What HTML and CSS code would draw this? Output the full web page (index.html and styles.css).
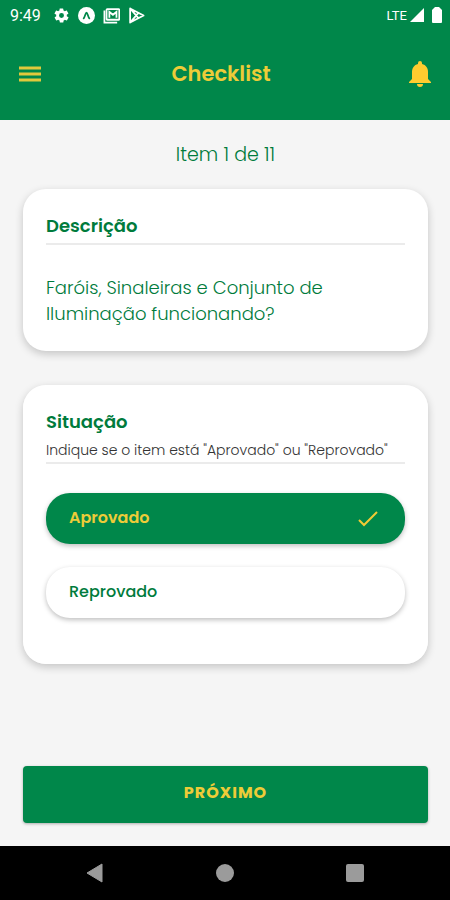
FILE: index.html
```html
<!DOCTYPE html>
<html lang="pt-BR">
<head>
    <meta charset="UTF-8">
    <meta name="viewport" content="width=device-width, initial-scale=1.0">
    <title>Checklist</title>
    <link rel="stylesheet" href="styles.css">
</head>
<body>
    <div class="status-bar">
        <span class="clock">9:49</span>
        <svg class="status-icon" viewBox="0 0 24 24"><path fill="#fff" fill-rule="evenodd" d="M19.4 13c0-.3.1-.7.1-1s0-.7-.1-1l2.1-1.600c.2-.2.2-.4.1-.6l-2-3.500c-.1-.2-.4-.3-.6-.2l-2.500 1c-.5-.4-1.100-.7-1.700-1l-.4-2.600c0-.2-.2-.5-.5-.5h-4c-.3 0-.5.200-.5.500l-.4 2.600c-.6.300-1.200.600-1.700 1l-2.500-1c-.2-.1-.5 0-.6.200l-2 3.500c-.1.200-.1.500.1.600L4.600 11c-.1.300-.1.700-.1 1s0 .7.1 1l-2.100 1.600c-.2.200-.2.400-.1.600l2 3.500c.1.200.4.300.6.200l2.500-1c.5.400 1.100.7 1.700 1l.4 2.600c0 .200.2.500.5.500h4c.3 0 .5-.2.5-.5l.4-2.600c.6-.3 1.200-.6 1.700-1l2.500 1c.2.100.5 0 .6-.2l2-3.500c.1-.2.1-.5-.1-.6zM12 15.500a3.500 3.500 0 1 1 0-7 3.500 3.500 0 0 1 0 7z"/></svg>
        <svg class="status-icon" viewBox="0 0 24 24"><circle cx="12" cy="12" r="12" fill="#fff"/><path d="M8 16c2-2 2.500-8 4-8s2 6 4 8" fill="none" stroke="#00874a" stroke-width="2.500" stroke-linecap="round"/></svg>
        <svg class="status-icon" viewBox="0 0 24 24" fill="none" stroke="#fff" stroke-width="2.500"><path d="M2 5v17h18"/><rect x="5" y="3" width="18" height="15" rx="1"/><path d="M9 15V7l5 4 5-4v8"/></svg>
        <svg class="status-icon" viewBox="0 0 24 24" fill="none" stroke="#fff" stroke-width="2.500" stroke-linejoin="round"><path d="M3 2l19 10L3 22zM3 2l12 14M3 22L15 8"/></svg>
        <span class="network">LTE</span>
        <svg class="signal" viewBox="0 0 14 14"><path d="M14 0v14H0z" fill="#fff"/></svg>
        <svg class="battery" viewBox="0 0 10 16"><path d="M3 0h4l3 3v12q0 1-1 1H1q-1 0-1-1V3z" fill="#fff"/></svg>
    </div>

    <header class="header">
        <button class="icon-button" type="button" aria-label="Menu">
            <svg width="22" height="16" viewBox="0 0 22 16"><path d="M0 2h22M0 8h22M0 14h22" stroke="#e0c93c" stroke-width="3"/></svg>
        </button>
        <h1>Checklist</h1>
        <button class="icon-button notifications" type="button" aria-label="Notificações">
            <svg width="22" height="26" viewBox="0 0 22 26"><path fill="#ffcc2f" d="M9 3V2a2 2 0 0 1 4 0v1c4 1 6 4 6 8v7l3 3v1H0v-1l3-3v-7c0-4 2-7 6-8zM8 23h6a3 3 0 0 1-6 0z"/></svg>
        </button>
    </header>

    <main>
        <p class="progress">Item 1 de 11</p>

        <section class="card">
            <h2>Descrição</h2>
            <p class="description">Faróis, Sinaleiras e Conjunto de Iluminação funcionando?</p>
        </section>

        <form class="checklist-form" id="checklist-form">
            <fieldset class="card" aria-labelledby="situacao">
                <h2 id="situacao">Situação
                    <small>Indique se o item está "Aprovado" ou "Reprovado"</small>
                </h2>
                <div class="options">
                    <label class="option">
                        <input type="radio" name="situacao" value="aprovado" checked>
                        <span>Aprovado</span>
                        <svg class="check" width="22" height="18" viewBox="0 0 22 18"><path d="M2 11l5 5L20 3" fill="none" stroke="#f0ca35" stroke-width="2"/></svg>
                    </label>
                    <label class="option">
                        <input type="radio" name="situacao" value="reprovado">
                        <span>Reprovado</span>
                        <svg class="check" width="22" height="18" viewBox="0 0 22 18"><path d="M2 11l5 5L20 3" fill="none" stroke="#f0ca35" stroke-width="2"/></svg>
                    </label>
                </div>
            </fieldset>
            <button class="next" type="submit">PRÓXIMO</button>
        </form>
    </main>

    <nav class="system-nav">
        <button type="button" aria-label="Voltar"><svg width="20" height="20" viewBox="0 0 20 20"><path d="M17 1v18L2 10z" fill="#9b9b9b" stroke="#9b9b9b" stroke-linejoin="round"/></svg></button>
        <button type="button" aria-label="Início"><svg width="20" height="20" viewBox="0 0 20 20"><circle cx="10" cy="10" r="9" fill="#9b9b9b"/></svg></button>
        <button type="button" aria-label="Recentes"><svg width="20" height="20" viewBox="0 0 20 20"><rect x="1" y="1" width="18" height="18" rx="2" fill="#9b9b9b"/></svg></button>
    </nav>
</body>
</html>
```
FILE: styles.css
```css
* {
    box-sizing: border-box;
}

body {
    display: flex;
    flex-direction: column;
    min-height: 100vh;
    margin: 0;
    background-color: #f5f5f5;
    color: #007b3c;
    font-family: Poppins, Inter, sans-serif;
}

h1, h2, p {
    margin: 0;
}

button {
    border: none;
    background: none;
    font-family: inherit;
    cursor: pointer;
}

.status-bar {
    display: flex;
    align-items: center;
    height: 30px;
    padding: 0 8px 0 10px;
    background-color: #00874a;
    color: white;
    font-family: Roboto, sans-serif;
}

.clock {
    margin-right: 4px;
    font-size: 16px;
}

.status-icon {
    width: 17px;
    height: 17px;
    margin-left: 8px;
}

.network {
    margin-left: auto;
    font-size: 13px;
}

.signal {
    width: 14px;
    height: 14px;
    margin: 0 8px 0 3px;
}

.battery {
    width: 10px;
    height: 16px;
}

.header {
    display: flex;
    align-items: center;
    justify-content: space-between;
    height: 90px;
    padding: 0 19px 3px;
    background-color: #00874a;
}

.header h1 {
    color: #edcc38;
    font-size: 21px;
    font-weight: 600;
    line-height: 30px;
}

.icon-button {
    display: flex;
    padding: 0;
}

.notifications {
    padding-left: 8px;
}

main {
    display: flex;
    flex: 1;
    flex-direction: column;
    padding: 20px 22px 23px 23px;
}

.progress {
    margin-bottom: 19px;
    font-size: 19px;
    font-weight: 300;
    line-height: 30px;
    text-align: center;
}

.card {
    min-width: 0;
    margin: 0;
    padding: 24px 23px;
    border: none;
    border-radius: 23px;
    background-color: white;
    box-shadow: 0 3px 8px rgba(0, 0, 0, 0.2);
}

.card h2 {
    padding-bottom: 4px;
    border-bottom: 2px solid #ebebeb;
    font-size: 18px;
    font-weight: 600;
    line-height: 26px;
}

.card small {
    display: block;
    margin-bottom: -4px;
    padding-top: 3px;
    color: #333;
    font-size: 14px;
    font-weight: 300;
    line-height: 24px;
    white-space: nowrap;
}

.description {
    padding-top: 30px;
    font-size: 18px;
    font-weight: 300;
    line-height: 26px;
}

.checklist-form {
    display: flex;
    flex: 1;
    flex-direction: column;
    justify-content: space-between;
    gap: 24px;
    margin-top: 34px;
}

.options {
    display: flex;
    flex-direction: column;
    gap: 23px;
    padding: 29px 0 22px;
}

.option {
    position: relative;
    display: flex;
    align-items: center;
    justify-content: space-between;
    height: 51px;
    padding: 0 26px 2px 23px;
    border-radius: 24px;
    background-color: white;
    box-shadow: 0 2px 5px rgba(0, 0, 0, 0.25);
    font-size: 16px;
    font-weight: 500;
    cursor: pointer;
}

.option input {
    position: absolute;
    opacity: 0;
}

.option:has(input:checked) {
    background-color: #00874a;
    color: #edcc38;
    font-weight: 600;
}

.option:has(input:focus-visible) {
    outline: 2px solid #edcc38;
}

.check {
    visibility: hidden;
}

.option input:checked ~ .check {
    visibility: visible;
}

.next {
    height: 57px;
    padding: 0 0 4px;
    border-radius: 4px;
    background-color: #00874a;
    box-shadow: 0 1px 3px rgba(0, 0, 0, 0.3);
    color: #edcc38;
    font-size: 16px;
    font-weight: 700;
    letter-spacing: 1px;
}

.system-nav {
    display: flex;
    align-items: center;
    justify-content: space-around;
    height: 54px;
    padding: 0 30px;
    background-color: black;
}

.system-nav button {
    display: flex;
    padding: 0;
}
```
